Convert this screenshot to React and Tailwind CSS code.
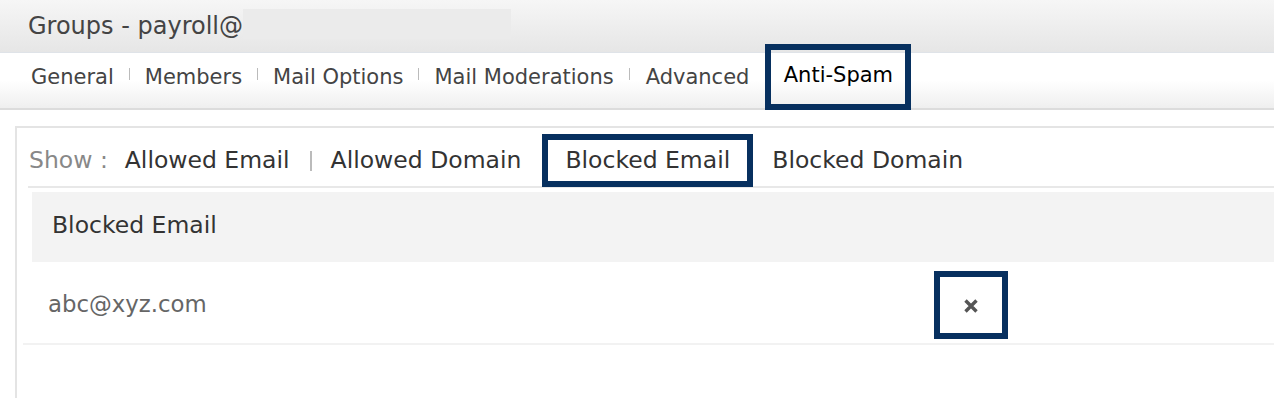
export default function App() {
  const navy = "border-[#07305f]";
  return (
    <div className="w-[1274px] h-[398px] overflow-hidden bg-white" style={{ fontFamily: "'DejaVu Sans', 'Open Sans', sans-serif" }}>
      {/* Header */}
      <div className="h-[53px] border-b border-[#dfe3e8] bg-gradient-to-b from-[#f6f6f6] to-[#e6e6e6] flex items-center pl-[28px]">
        <span className="text-[24px] text-[#444] leading-none">Groups - payroll@</span>
        <span className="w-[268px] h-[30px] bg-[#ebebeb] -mt-[4px]"></span>
      </div>
      {/* Tabs */}
      <div className="h-[57px] border-b-2 border-[#dcdcdc] bg-gradient-to-b from-white via-white to-[#efefef] flex items-center pl-[16px] pb-[6px] text-[21px] text-[#444]">
        {["General", "Members", "Mail Options", "Mail Moderations", "Advanced"].map((t, i) => (
          <div key={t} className="flex items-center">
            {i > 0 && <span className="w-px h-[12px] bg-[#bbb] -mt-[8px]"></span>}
            <span className={i === 4 ? "pl-[16px] pr-[16px]" : "px-[15px]"}>{t}</span>
          </div>
        ))}
        <div className={`self-start mt-[-9px] h-[66px] w-[146px] border-[6px] ${navy} flex items-center justify-center text-black`}>
          <span className="-mt-[2px]">Anti-Spam</span>
        </div>
      </div>
      {/* Panel */}
      <div className="mt-[16px] ml-[15px] border-l-2 border-t-2 border-[#e4e4e4] h-[300px]">
        <div className="h-[58px] flex items-center pl-[12px] text-[23.5px] text-[#333]">
          <span className="text-[#888] mt-[7px]">Show :</span>
          <span className="ml-[17px] mt-[7px]">Allowed Email</span>
          <span className="ml-[20px] mr-[19px] w-[2px] h-[20px] bg-[#bbb] mt-[7px]"></span>
          <span className="mt-[7px]">Allowed Domain</span>
          <div className={`self-end mb-[-1px] ml-[21px] h-[53px] w-[211px] border-[6px] ${navy} flex items-center justify-center`}>
            <span className="mt-[1px]">Blocked Email</span>
          </div>
          <span className="ml-[19px] mt-[7px]">Blocked Domain</span>
        </div>
        <div className="ml-[11px] h-[2px] bg-[#e8e8e8]"></div>
        <div className="ml-[15px] mt-[4px] h-[70px] bg-[#f3f3f3] flex items-center pl-[20px] text-[23.5px] text-[#333]">
          <span className="-mt-[2px]">Blocked Email</span>
        </div>
        <div className="ml-[6px] h-[83px] border-b-2 border-[#f2f2f2] flex items-center text-[22.8px] text-[#666]">
          <span className="ml-[25px] w-[886px] mt-[4px]">abc@xyz.com</span>
          <div className={`w-[74px] h-[68px] border-[6px] ${navy} flex items-center justify-center mt-[4px]`}>
            <svg width="16" height="16" viewBox="0 0 16 16" className="mt-[2px]">
              <path d="M2.5 2.5 L13.5 13.5 M13.5 2.5 L2.5 13.5" stroke="#555" strokeWidth="3.4" strokeLinecap="butt" />
            </svg>
          </div>
        </div>
      </div>
    </div>
  );
}
